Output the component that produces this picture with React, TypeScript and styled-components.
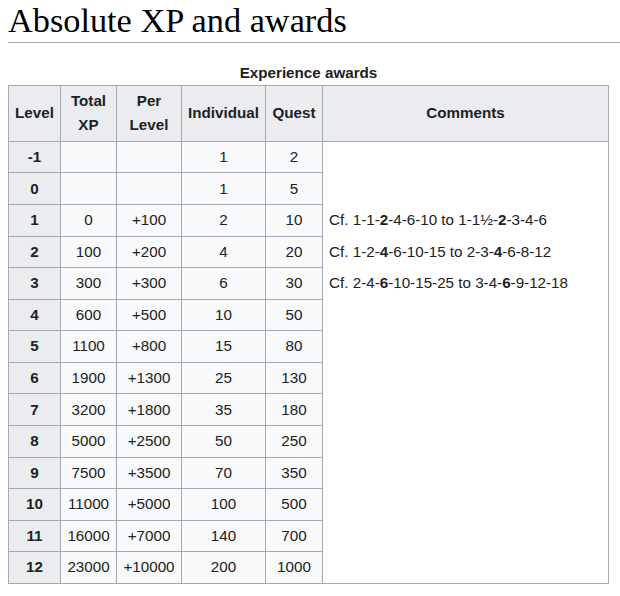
import React from "react";
import styled, { createGlobalStyle } from "styled-components";

const Global = createGlobalStyle`
  html, body { margin: 0; padding: 0; background: #ffffff; }
  body { color: #202122; }
`;

const Page = styled.div`
  padding-left: 8px;
  width: 612px;
  font-family: "Liberation Sans", Arial, sans-serif;
  font-size: 15.2px;
  line-height: 1.6;
  color: #202122;
`;

const Heading = styled.h2`
  margin: 0;
  padding: 0 0 1px 0;
  font-family: "Liberation Serif", "Times New Roman", serif;
  font-weight: normal;
  font-size: 34.3px;
  line-height: 41px;
  color: #000000;
  border-bottom: 1px solid #a2a9b1;
`;

const Table = styled.table`
  margin-top: 17.7px;
  width: 601px;
  table-layout: fixed;
  border-collapse: collapse;
  border: 1px solid #a2a9b1;
  background: #f8f9fa;
  color: #202122;
`;

const Caption = styled.caption`
  font-weight: bold;
  text-align: center;
  padding: 0;
`;

const Col = styled.col<{ $w: number }>`
  width: ${(p) => p.$w}px;
`;

const HeadCell = styled.th`
  background: #eaecf0;
  border: 1px solid #a2a9b1;
  padding: 3.14px 0.4em;
  font-weight: bold;
  text-align: center;
  vertical-align: middle;
`;

const LevelCell = styled.th`
  background: #eaecf0;
  border: 1px solid #a2a9b1;
  padding: 3.14px 0.4em;
  font-weight: bold;
  text-align: center;
`;

const Cell = styled.td`
  border: 1px solid #a2a9b1;
  padding: 3.14px 0.4em;
  text-align: center;
  white-space: nowrap;
`;

const CommentCell = styled.td<{ $last: boolean }>`
  background: #ffffff;
  border-left: 1px solid #a2a9b1;
  border-right: 1px solid #a2a9b1;
  border-top: none;
  border-bottom: ${(p) => (p.$last ? "1px solid #a2a9b1" : "none")};
  padding: 3.14px 0.4em;
  text-align: left;
  white-space: nowrap;
`;

type Row = {
  level: string;
  total: string;
  per: string;
  ind: string;
  quest: string;
  comment?: React.ReactNode;
};

const rows: Row[] = [
  { level: "-1", total: "", per: "", ind: "1", quest: "2" },
  { level: "0", total: "", per: "", ind: "1", quest: "5" },
  {
    level: "1",
    total: "0",
    per: "+100",
    ind: "2",
    quest: "10",
    comment: (
      <>
        Cf. 1-1-<b>2</b>-4-6-10 to 1-1½-<b>2</b>-3-4-6
      </>
    ),
  },
  {
    level: "2",
    total: "100",
    per: "+200",
    ind: "4",
    quest: "20",
    comment: (
      <>
        Cf. 1-2-<b>4</b>-6-10-15 to 2-3-<b>4</b>-6-8-12
      </>
    ),
  },
  {
    level: "3",
    total: "300",
    per: "+300",
    ind: "6",
    quest: "30",
    comment: (
      <>
        Cf. 2-4-<b>6</b>-10-15-25 to 3-4-<b>6</b>-9-12-18
      </>
    ),
  },
  { level: "4", total: "600", per: "+500", ind: "10", quest: "50" },
  { level: "5", total: "1100", per: "+800", ind: "15", quest: "80" },
  { level: "6", total: "1900", per: "+1300", ind: "25", quest: "130" },
  { level: "7", total: "3200", per: "+1800", ind: "35", quest: "180" },
  { level: "8", total: "5000", per: "+2500", ind: "50", quest: "250" },
  { level: "9", total: "7500", per: "+3500", ind: "70", quest: "350" },
  { level: "10", total: "11000", per: "+5000", ind: "100", quest: "500" },
  { level: "11", total: "16000", per: "+7000", ind: "140", quest: "700" },
  { level: "12", total: "23000", per: "+10000", ind: "200", quest: "1000" },
];

export default function App() {
  return (
    <Page>
      <Global />
      <Heading>Absolute XP and awards</Heading>
      <Table>
        <Caption>Experience awards</Caption>
        <colgroup>
          <Col $w={52} />
          <Col $w={56} />
          <Col $w={65} />
          <Col $w={84} />
          <Col $w={57} />
          <Col $w={286} />
        </colgroup>
        <thead>
          <tr>
            <HeadCell>Level</HeadCell>
            <HeadCell>Total XP</HeadCell>
            <HeadCell>Per Level</HeadCell>
            <HeadCell>Individual</HeadCell>
            <HeadCell>Quest</HeadCell>
            <HeadCell>Comments</HeadCell>
          </tr>
        </thead>
        <tbody>
          {rows.map((r, i) => (
            <tr key={r.level}>
              <LevelCell>{r.level}</LevelCell>
              <Cell>{r.total}</Cell>
              <Cell>{r.per}</Cell>
              <Cell>{r.ind}</Cell>
              <Cell>{r.quest}</Cell>
              <CommentCell $last={i === rows.length - 1}>{r.comment}</CommentCell>
            </tr>
          ))}
        </tbody>
      </Table>
    </Page>
  );
}
